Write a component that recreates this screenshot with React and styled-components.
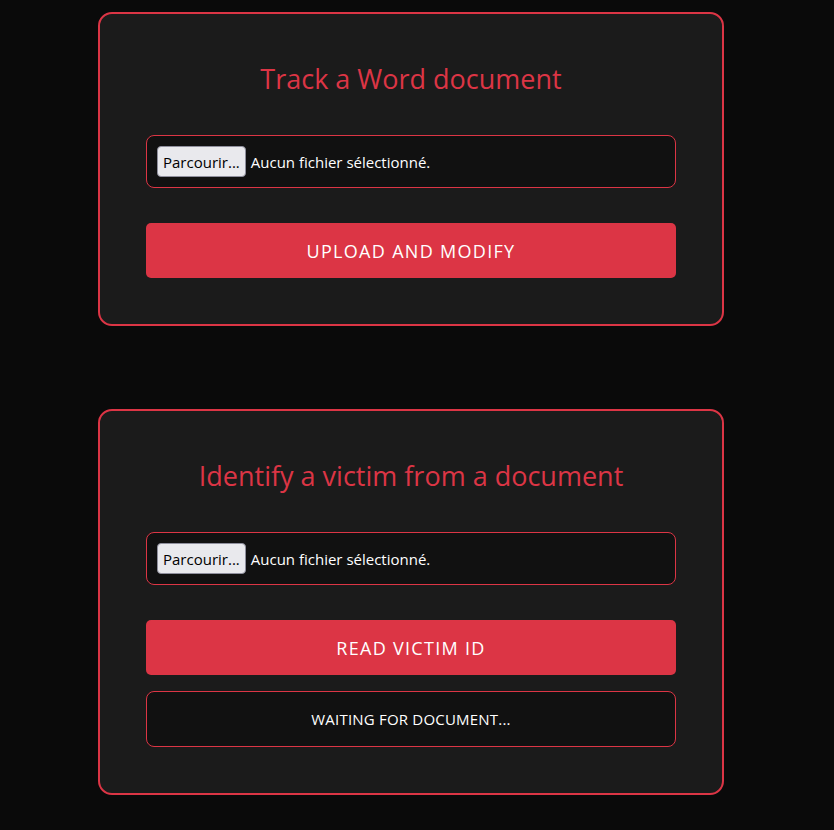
import styled, { createGlobalStyle } from 'styled-components';

const GlobalStyle = createGlobalStyle`
    * {
        box-sizing: border-box;
    }
    body {
        margin: 0;
        background-color: #0a0a0a;
        font-family: 'Open Sans', 'Noto Sans', sans-serif;
        color: #fff;
    }
`;

const Tracker = ({ title, action, status }) => (
    <Card>
        <Title>{title}</Title>
        <FileBox>
            <BrowseButton type="button">Parcourir...</BrowseButton>
            <FileName>Aucun fichier sélectionné.</FileName>
        </FileBox>
        <ActionButton type="button">{action}</ActionButton>
        {status && <StatusBox>{status}</StatusBox>}
    </Card>
);

const App = () => (
    <>
        <GlobalStyle />
        <Page>
            <Tracker title="Track a Word document" action="Upload and modify" />
            <Tracker
                title="Identify a victim from a document"
                action="Read victim ID"
                status="WAITING FOR DOCUMENT..."
            />
        </Page>
    </>
);

const Page = styled.main`
    display: flex;
    flex-direction: column;
    align-items: center;
    gap: 83px;
    padding: 12px 12px 40px 0;
`;

const Card = styled.section`
    width: 626px;
    padding: 45px 46px 46px;
    background-color: #1b1b1b;
    border: 2px solid #dc3545;
    border-radius: 14px;
    display: flex;
    flex-direction: column;
`;

const Title = styled.h2`
    margin: 0 0 36px;
    color: #dc3545;
    font-size: 27px;
    font-weight: 400;
    line-height: 40px;
    text-align: center;
`;

const FileBox = styled.div`
    display: flex;
    align-items: center;
    gap: 5px;
    height: 53px;
    padding: 0 10px;
    background-color: #111;
    border: 1px solid #dc3545;
    border-radius: 8px;
`;

const BrowseButton = styled.button`
    height: 31px;
    padding: 0 5px;
    background-color: #e9e9ed;
    border: 1px solid #8f8f9d;
    border-radius: 4px;
    color: #000;
    font-family: inherit;
    font-size: 15px;
`;

const FileName = styled.span`
    font-size: 15px;
`;

const ActionButton = styled.button`
    margin-top: 35px;
    height: 55px;
    background-color: #dc3545;
    border: none;
    border-radius: 5px;
    color: #fff;
    font-family: inherit;
    font-size: 18px;
    letter-spacing: 1.3px;
    text-transform: uppercase;
`;

const StatusBox = styled.div`
    margin-top: 16px;
    height: 56px;
    display: flex;
    align-items: center;
    justify-content: center;
    background-color: #111;
    border: 1px solid #dc3545;
    border-radius: 8px;
    font-size: 15px;
    letter-spacing: 0.2px;
`;

export default App;
